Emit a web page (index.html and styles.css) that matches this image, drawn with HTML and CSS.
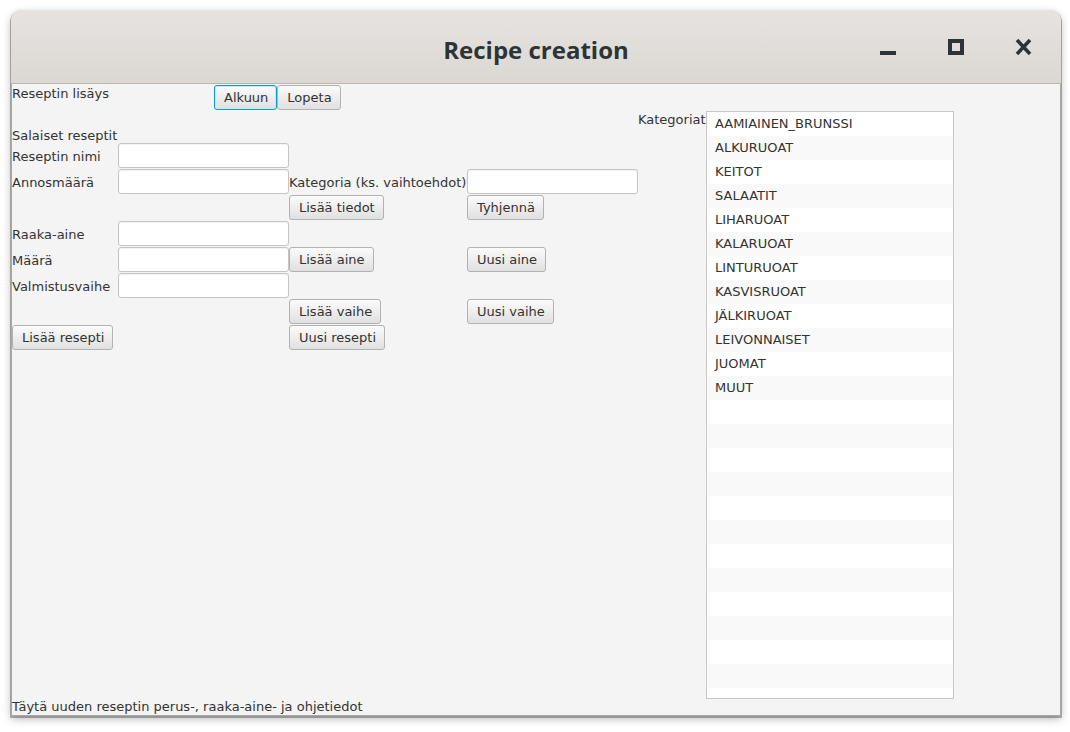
FILE: index.html
```html
<!DOCTYPE html>
<html lang="fi">
<head>
<meta charset="utf-8">
<title>Recipe creation</title>
<link rel="stylesheet" href="styles.css">
</head>
<body>
<div class="window">
  <header class="titlebar">
    <div class="title">Recipe creation</div>
    <div class="controls">
      <span class="ctl"><svg width="17" height="16" viewBox="0 0 17 16"><rect x="1" y="12" width="16" height="4" fill="#2e3436"/></svg></span>
      <span class="ctl"><svg width="17" height="16" viewBox="0 0 17 16"><rect x="3" y="2" width="12" height="12" fill="none" stroke="#2e3436" stroke-width="4"/></svg></span>
      <span class="ctl"><svg width="17" height="16" viewBox="0 0 17 16"><path d="M2 1 L15 15 M15 1 L2 15" stroke="#2e3436" stroke-width="3.6" fill="none"/></svg></span>
    </div>
  </header>
  <main class="content">
    <div class="form">
      <div class="lbl r1 top">Reseptin lisäys</div>
      <div class="topbtns r1">
        <button class="btn focused">Alkuun</button><button class="btn">Lopeta</button>
      </div>

      <div class="lbl r2 bottom">Salaiset reseptit</div>
      <div class="lbl kat">Kategoriat</div>
      <ul class="list">
        <li>AAMIAINEN_BRUNSSI</li>
        <li>ALKURUOAT</li>
        <li>KEITOT</li>
        <li>SALAATIT</li>
        <li>LIHARUOAT</li>
        <li>KALARUOAT</li>
        <li>LINTURUOAT</li>
        <li>KASVISRUOAT</li>
        <li>JÄLKIRUOAT</li>
        <li>LEIVONNAISET</li>
        <li>JUOMAT</li>
        <li>MUUT</li>
        <li></li><li></li><li></li><li></li><li></li><li></li><li></li><li></li><li></li><li></li><li></li><li></li>
      </ul>

      <div class="lbl r3">Reseptin nimi</div>
      <input class="tf r3 c2" type="text">

      <div class="lbl r4">Annosmäärä</div>
      <input class="tf r4 c2" type="text">
      <div class="lbl r4 c3">Kategoria (ks. vaihtoehdot)</div>
      <input class="tf r4 c4" type="text">

      <button class="btn r5 c3">Lisää tiedot</button>
      <button class="btn r5 c4">Tyhjennä</button>

      <div class="lbl r6">Raaka-aine</div>
      <input class="tf r6 c2" type="text">

      <div class="lbl r7">Määrä</div>
      <input class="tf r7 c2" type="text">
      <button class="btn r7 c3">Lisää aine</button>
      <button class="btn r7 c4">Uusi aine</button>

      <div class="lbl r8">Valmistusvaihe</div>
      <input class="tf r8 c2" type="text">

      <button class="btn r9 c3">Lisää vaihe</button>
      <button class="btn r9 c4">Uusi vaihe</button>

      <button class="btn r10 c1">Lisää resepti</button>
      <button class="btn r10 c3">Uusi resepti</button>
    </div>
    <div class="status">Täytä uuden reseptin perus-, raaka-aine- ja ohjetiedot</div>
  </main>
</div>
</body>
</html>
```

FILE: styles.css
```css
html, body {
  margin: 0;
  padding: 0;
  background: #ffffff;
}
body {
  width: 1070px;
  height: 732px;
  overflow: hidden;
  padding-top: 10px;
  padding-left: 11px;
  box-sizing: border-box;
}
.window {
  width: 1050px;
  height: 706px;
  border-radius: 11px 11px 0 0;
  box-shadow: 0 1px 0 1px rgba(0,0,0,0.28), 0 3px 9px rgba(0,0,0,0.28);
  display: flex;
  flex-direction: column;
  overflow: hidden;
  background: #f4f4f4;
}
.titlebar {
  height: 73px;
  flex: none;
  background: linear-gradient(#e6e3e0, #dbd8d4);
  border-bottom: 1px solid #bdb7b0;
  position: relative;
  display: flex;
  align-items: center;
  justify-content: center;
}
.title {
  font-family: "Open Sans", "DejaVu Sans", sans-serif;
  font-weight: 700;
  font-size: 24px;
  line-height: 30px;
  color: #2e3436;
  margin-top: 6px;
}
.controls {
  position: absolute;
  right: 29px;
  top: 29px;
  display: flex;
  gap: 51px;
}
.ctl {
  display: block;
  width: 17px;
  height: 16px;
}
.ctl svg { display: block; }
.content {
  flex: 1;
  display: flex;
  flex-direction: column;
  border-left: 1px solid #a8a8a8;
  border-right: 1px solid #a8a8a8;
  border-bottom: 1px solid #a8a8a8;
  font-family: "DejaVu Sans", sans-serif;
  font-size: 13px;
  color: #333333;
}
.form {
  flex: 1;
  display: grid;
  grid-template-columns: 106px 171px 178px 171px 68px 248px;
  grid-template-rows: 27px 32px 26px 26px 26px 26px 26px 26px 26px 26px 1fr;
}
.status {
  height: 16px;
  line-height: 16px;
  white-space: nowrap;
}
.lbl {
  white-space: nowrap;
  align-self: center;
  line-height: 15px;
}
.lbl.top { align-self: start; padding-top: 2px; }
.lbl.bottom { align-self: end; }
.r1 { grid-row: 1; }
.r2 { grid-row: 2; }
.r3 { grid-row: 3; }
.r4 { grid-row: 4; }
.r5 { grid-row: 5; }
.r6 { grid-row: 6; }
.r7 { grid-row: 7; }
.r8 { grid-row: 8; }
.r9 { grid-row: 9; }
.r10 { grid-row: 10; }
.c1 { grid-column: 1; }
.c2 { grid-column: 2; }
.c3 { grid-column: 3; }
.c4 { grid-column: 4; }
.topbtns {
  grid-column: 2 / span 2;
  display: flex;
  padding-left: 96px;
  padding-top: 1px;
  align-items: flex-start;
}
.kat {
  grid-column: 5;
  grid-row: 2 / span 2;
  align-self: start;
  padding-top: 1px;
}
.tf {
  box-sizing: border-box;
  height: 25px;
  width: 171px;
  margin: 0;
  align-self: start;
  border: 1px solid #c4c4c4;
  border-radius: 3px;
  background: #ffffff;
  box-shadow: inset 0 1px 1px rgba(0,0,0,0.05);
  font: inherit;
  padding: 0 6px;
}
.btn {
  box-sizing: border-box;
  height: 25px;
  margin: 0;
  justify-self: start;
  align-self: start;
  padding: 0 8px 0 9px;
  font: inherit;
  color: #333333;
  border: 1px solid #b2b2b2;
  border-radius: 3px;
  background: linear-gradient(#fbfbfb, #e0e0e0);
  white-space: nowrap;
}
.btn.focused {
  border: 1px solid #039ed3;
  box-shadow: inset 0 0 0 1px #cbe9f5;
}
.list {
  grid-column: 6;
  grid-row: 2 / span 10;
  list-style: none;
  margin: 0;
  padding: 0;
  height: 588px;
  box-sizing: border-box;
  border: 1px solid #c8c8c8;
  background: #ffffff;
  overflow: hidden;
  align-self: start;
}
.list li {
  height: 24px;
  line-height: 24px;
  padding-left: 8px;
  background: #ffffff;
  color: #333333;
}
.list li:nth-child(even) {
  background: #f9f9f9;
}
```
